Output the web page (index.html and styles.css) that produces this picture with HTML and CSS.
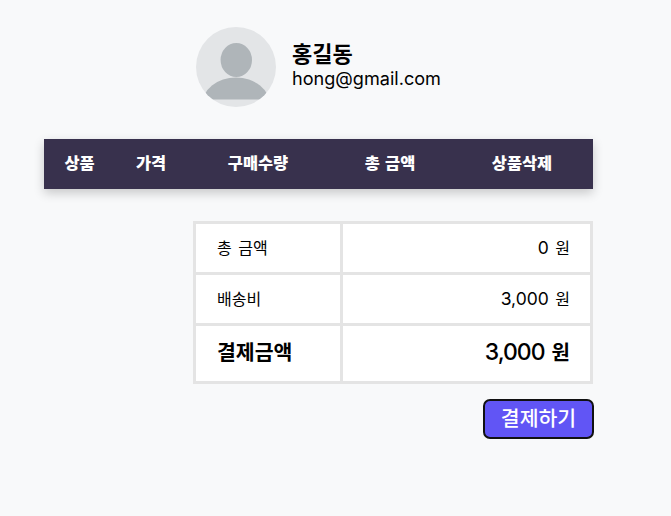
FILE: index.html
```html
<!DOCTYPE html>
<html lang="ko">
<head>
<meta charset="utf-8">
<title>결제</title>
<link rel="stylesheet" href="styles.css">
</head>
<body>
<main class="page">
  <section class="profile">
    <svg class="avatar" viewBox="0 0 80 80" aria-hidden="true">
      <defs>
        <clipPath id="disc"><circle cx="40" cy="40" r="40"/></clipPath>
        <clipPath id="floor"><rect x="0" y="0" width="80" height="72.5"/></clipPath>
      </defs>
      <circle cx="40" cy="40" r="40" fill="#e3e5e7"/>
      <ellipse cx="40.3" cy="33" rx="15.7" ry="17" fill="#afb5b9"/>
      <g clip-path="url(#disc)">
        <ellipse cx="40" cy="78" rx="34" ry="27.5" fill="#afb5b9" clip-path="url(#floor)"/>
      </g>
    </svg>
    <div class="who">
      <div class="name">홍길동</div>
      <div class="email">hong@gmail.com</div>
    </div>
  </section>
  <div class="cart-head">
    <span>상품</span>
    <span>가격</span>
    <span>구매수량</span>
    <span>총 금액</span>
    <span>상품삭제</span>
  </div>
  <section class="summary">
    <table class="totals">
      <tr class="r1"><td class="label">총 금액</td><td class="val"><span class="num">0</span> 원</td></tr>
      <tr class="r2"><td class="label">배송비</td><td class="val"><span class="num">3,000</span> 원</td></tr>
      <tr class="r3"><td class="label strong">결제금액</td><td class="val big"><span class="num">3,000</span> 원</td></tr>
    </table>
    <button class="pay" type="button">결제하기</button>
  </section>
</main>
</body>
</html>
```
FILE: styles.css
```css
* { box-sizing: border-box; }
html, body { margin: 0; padding: 0; }
body {
  background: #f8f9fa;
  color: #000;
  font-family: Inter, "Noto Sans CJK KR", sans-serif;
  height: 516px;
  overflow: hidden;
}
.page { width: 549px; margin-left: 44px; padding-top: 27px; }
.profile { display: flex; align-items: center; gap: 16px; margin-left: 152px; height: 80px; }
.avatar { width: 80px; height: 80px; display: block; }
.who { display: flex; flex-direction: column; }
.name { font-size: 22px; font-weight: 700; line-height: 26px; margin-top: -3px; }
.email { font-size: 18.1px; line-height: 24px; margin-top: -1px; }
.cart-head {
  margin-top: 32px;
  height: 50px;
  padding-bottom: 5px;
  background: #38314d;
  color: #fff;
  box-shadow: 0 4px 10px rgba(0, 0, 0, .2);
  display: grid;
  grid-template-columns: 71px 72px 142px 122px 142px;
  align-items: center;
  text-align: center;
  font-size: 16.4px;
  font-weight: 900;
  word-spacing: 2px;
}
.summary { display: flex; flex-direction: column; align-items: flex-end; margin-top: 32px; }
.totals {
  width: 400px;
  border-collapse: separate;
  border-spacing: 0;
  background: #fff;
  border-top: 3px solid #e4e4e4;
  border-left: 3px solid #e4e4e4;
  table-layout: fixed;
}
.totals td {
  border-right: 3px solid #e4e4e4;
  border-bottom: 3px solid #e4e4e4;
  padding: 0 0 2px;
  font-size: 16px;
  word-spacing: 2px;
}
.label { width: 147px; padding-left: 21px !important; }
.val { text-align: right; padding-right: 20px !important; }
.num { font-size: 17.5px; }
.r1 td { height: 51px; }
.r2 td { height: 51px; }
.r3 td { height: 58px; padding-bottom: 5px; }
.totals .strong { font-size: 20.5px; font-weight: 700; }
.totals .big { font-size: 20px; font-weight: 600; }
.big .num { font-size: 23px; font-weight: 500; letter-spacing: -1px; }
.pay {
  margin-top: 15px;
  margin-right: -1px;
  width: 111px;
  height: 40px;
  padding: 0 0 5px;
  border: 2px solid #111;
  border-radius: 7px;
  background: #6155f5;
  color: #fff;
  font: 500 20.5px Inter, "Noto Sans CJK KR", sans-serif;
}
```
